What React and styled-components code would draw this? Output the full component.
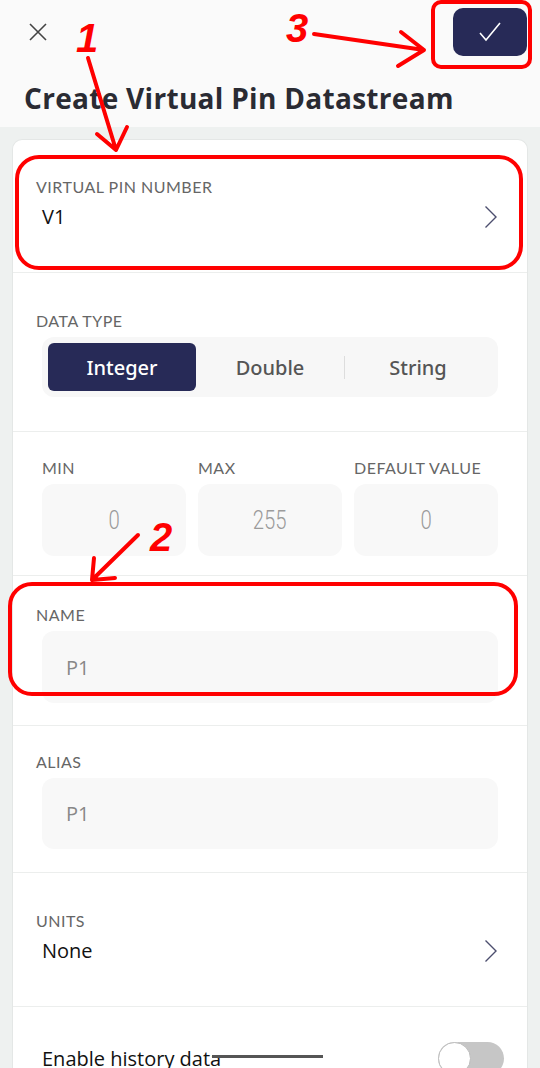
import React from "react";
import styled, { createGlobalStyle } from "styled-components";

const GlobalStyle = createGlobalStyle`
  html, body {
    margin: 0;
    padding: 0;
    background: #eef1f0;
  }
  body {
    font-family: "Open Sans", "Noto Sans", sans-serif;
    width: 540px;
    height: 1068px;
    overflow: hidden;
  }
`;

const Page = styled.div`
  position: relative;
  width: 540px;
  height: 1068px;
  overflow: hidden;
  background: #eef1f0;
`;

const Header = styled.header`
  background: #fafafa;
  height: 127px;
  box-sizing: border-box;
  padding: 8px 13px 0 24px;
`;

const TopRow = styled.div`
  display: flex;
  align-items: center;
  justify-content: space-between;
  height: 48px;
`;

const CloseButton = styled.button`
  border: 0;
  background: none;
  padding: 0;
  margin-left: 4px;
  width: 20px;
  height: 20px;
  display: flex;
`;

const DoneButton = styled.button`
  border: 0;
  width: 74px;
  height: 48px;
  border-radius: 10px;
  background: #272a57;
  display: flex;
  align-items: center;
  justify-content: center;
  padding: 0;
`;

const Title = styled.h1`
  margin: 25px 0 0;
  font-family: "Open Sans", sans-serif;
  font-weight: 700;
  font-size: 28px;
  line-height: 34px;
  letter-spacing: 0.3px;
  color: #2a2b33;
  white-space: nowrap;
`;

const Body = styled.div`
  padding: 12px 12px 0;
`;

const Card = styled.div`
  background: #ffffff;
  border: 1px solid #e4e7e6;
  border-bottom: 0;
  border-radius: 10px 10px 0 0;
`;

const Section = styled.section`
  box-sizing: border-box;
  height: ${(p) => p.$height}px;
  padding: ${(p) => p.$top}px 29px 0 23px;
  border-bottom: ${(p) => (p.$last ? "0" : "1px solid #eceeed")};
`;

const Label = styled.div`
  font-family: "Lato", sans-serif;
  font-size: 16px;
  line-height: 18px;
  letter-spacing: 0.5px;
  color: #666666;
  text-transform: uppercase;
  white-space: nowrap;
`;

const ValueRow = styled.div`
  display: flex;
  align-items: center;
  justify-content: space-between;
  margin-top: 9px;
  padding-left: 6px;
`;

const Value = styled.span`
  font-size: 20px;
  line-height: 24px;
  color: #111111;
`;

const Segmented = styled.div`
  display: grid;
  grid-template-columns: repeat(3, 1fr);
  margin: 7px 0 0 6px;
  padding: 6px;
  height: 60px;
  box-sizing: border-box;
  background: #f7f7f7;
  border-radius: 12px;
`;

const Segment = styled.div`
  position: relative;
  display: flex;
  align-items: center;
  justify-content: center;
  border-radius: 6px;
  font-family: "Noto Sans", sans-serif;
  font-size: 20px;
  font-weight: 500;
  background: ${(p) => (p.$active ? "#272a57" : "transparent")};
  color: ${(p) => (p.$active ? "#ffffff" : "#555555")};

  &::before {
    content: "";
    display: ${(p) => (p.$divider ? "block" : "none")};
    position: absolute;
    left: 0;
    top: 13px;
    bottom: 12px;
    width: 1px;
    background: #dddddd;
  }
`;

const RangeGrid = styled.div`
  display: grid;
  grid-template-columns: repeat(3, 1fr);
  column-gap: 12px;
  padding-left: 6px;
`;

const Field = styled.div`
  display: flex;
  flex-direction: column;
`;

const Input = styled.div`
  margin-top: 7px;
  margin-left: ${(p) => p.$indent || 0}px;
  height: ${(p) => p.$h || 72}px;
  background: #f8f8f8;
  border-radius: 12px;
  display: flex;
  align-items: center;
  justify-content: ${(p) => (p.$center ? "center" : "flex-start")};
  padding: 0 24px;
  box-sizing: border-box;
`;

const NumberText = styled.span`
  font-family: "Roboto", sans-serif;
  font-weight: 300;
  font-size: 26px;
  color: #9b9b9b;
  transform: scaleX(0.78);
`;

const InputText = styled.span`
  font-size: 20px;
  color: #888888;
`;

const ToggleRow = styled.div`
  display: flex;
  align-items: center;
  justify-content: space-between;
  padding-left: 6px;
`;

const Toggle = styled.div`
  position: relative;
  width: 66px;
  height: 33px;
  border-radius: 17px;
  background: #c6c6c6;
  margin-right: -6px;

  &::after {
    content: "";
    position: absolute;
    left: 0;
    top: 0;
    width: 31px;
    height: 31px;
    border-radius: 50%;
    background: #ffffff;
    border: 1px solid #bdbdbd;
  }
`;

const Overlay = styled.svg`
  position: absolute;
  left: 0;
  top: 0;
  pointer-events: none;
`;

const Mark = styled.text`
  font-family: "Liberation Sans", "Roboto", sans-serif;
  font-weight: 700;
  font-style: italic;
  font-size: 40px;
  fill: #ff0000;
`;

const Chevron = () => (
  <svg width="14" height="24" viewBox="0 0 14 24">
    <path d="M1.5 1.5 L12 12 L1.5 22.5" fill="none" stroke="#4c4e6e" strokeWidth="1.4" />
  </svg>
);

export default function App() {
  return (
    <Page>
      <GlobalStyle />
      <Header>
        <TopRow>
          <CloseButton aria-label="close">
            <svg width="20" height="20" viewBox="0 0 20 20">
              <path d="M2 2 L18 18 M18 2 L2 18" stroke="#444" strokeWidth="1.6" />
            </svg>
          </CloseButton>
          <DoneButton aria-label="save">
            <svg width="32" height="26" viewBox="0 0 32 26">
              <path d="M6 14 L12 21 L26 4" fill="none" stroke="#ffffff" strokeWidth="1.6" />
            </svg>
          </DoneButton>
        </TopRow>
        <Title>Create Virtual Pin Datastream</Title>
      </Header>

      <Body>
        <Card>
          <Section $height={133} $top={38}>
            <Label>Virtual Pin Number</Label>
            <ValueRow>
              <Value>V1</Value>
              <Chevron />
            </ValueRow>
          </Section>

          <Section $height={159} $top={39}>
            <Label>Data Type</Label>
            <Segmented>
              <Segment $active>Integer</Segment>
              <Segment>Double</Segment>
              <Segment $divider>String</Segment>
            </Segmented>
          </Section>

          <Section $height={144} $top={27}>
            <RangeGrid>
              <Field>
                <Label>Min</Label>
                <Input $center>
                  <NumberText>0</NumberText>
                </Input>
              </Field>
              <Field>
                <Label>Max</Label>
                <Input $center>
                  <NumberText>255</NumberText>
                </Input>
              </Field>
              <Field>
                <Label>Default Value</Label>
                <Input $center>
                  <NumberText>0</NumberText>
                </Input>
              </Field>
            </RangeGrid>
          </Section>

          <Section $height={150} $top={30}>
            <Label>Name</Label>
            <Input $indent={6} $h={72}>
              <InputText>P1</InputText>
            </Input>
          </Section>

          <Section $height={147} $top={27}>
            <Label>Alias</Label>
            <Input $indent={6} $h={71}>
              <InputText>P1</InputText>
            </Input>
          </Section>

          <Section $height={134} $top={39}>
            <Label>Units</Label>
            <ValueRow>
              <Value>None</Value>
              <Chevron />
            </ValueRow>
          </Section>

          <Section $height={120} $top={35} $last>
            <ToggleRow>
              <Value>Enable history data</Value>
              <Toggle />
            </ToggleRow>
          </Section>
        </Card>
      </Body>

      <Overlay width="540" height="1068" viewBox="0 0 540 1068">
        <g fill="none" stroke="#ff0000" strokeWidth="4" strokeLinecap="round" strokeLinejoin="round">
          <rect x="433" y="2" width="97" height="65" rx="8" />
          <rect x="17" y="157" width="504" height="111" rx="22" />
          <rect x="10" y="584" width="506" height="110" rx="22" />
          <path d="M88 58 L116 150 M97 134 L116 150 L127 127" />
          <path d="M314 34 L424 50 M401 32 L424 50 L398 66" />
          <path d="M138 535 L92 580 M94 558 L92 580 L115 578" />
        </g>
        <Mark x="76" y="52">1</Mark>
        <Mark x="286" y="42">3</Mark>
        <Mark x="150" y="551">2</Mark>
        <rect x="212" y="1055" width="111" height="3" fill="#555555" />
      </Overlay>
    </Page>
  );
}
